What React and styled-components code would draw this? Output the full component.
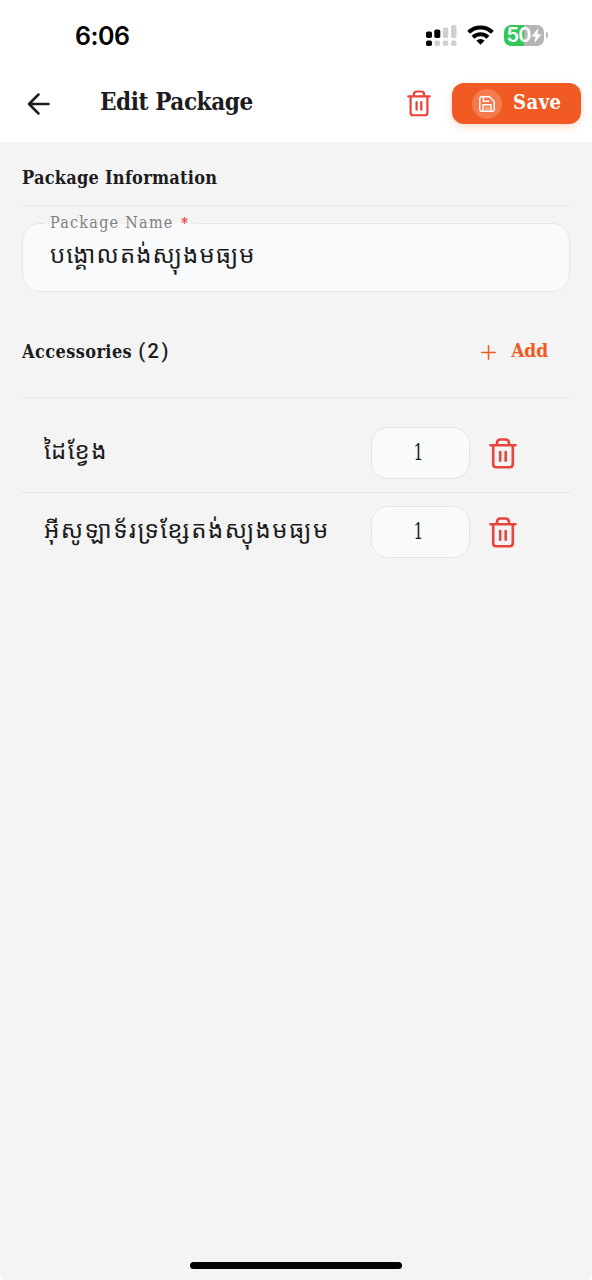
import React, { useState } from 'react';
import styled, { createGlobalStyle } from 'styled-components';

const slab = `'Roboto Slab', 'DejaVu Serif Condensed', 'DejaVu Serif', serif`;
const khmer = `'Noto Sans Khmer', 'Khmer OS', 'Noto Sans', sans-serif`;

const GlobalStyle = createGlobalStyle`
  * { box-sizing: border-box; }
  body { margin: 0; background: #fff; }
  button { border: 0; padding: 0; background: none; cursor: pointer; }
`;

const Screen = styled.div`
  display: flex;
  flex-direction: column;
  width: 592px;
  height: 1280px;
  overflow: hidden;
  background: #f4f4f4;
  border-radius: 0 0 5px 5px;
  color: #1c1c1e;
`;

const StatusBar = styled.div`
  display: flex;
  align-items: center;
  justify-content: space-between;
  height: 70px;
  padding: 0 44px 0 75px;
  background: #fff;
`;

const Time = styled.span`
  padding-top: 1px;
  font: 600 25px/30px Inter, sans-serif;
  letter-spacing: -0.5px;
  color: #000;
`;

const StatusIcons = styled.div`
  display: flex;
  align-items: center;
  gap: 10px;
`;

const Battery = styled.div`
  display: flex;
  align-items: center;
  gap: 2px;
`;

const BatteryBody = styled.div`
  display: flex;
  align-items: center;
  justify-content: center;
  width: 40px;
  height: 21px;
  border-radius: 7px;
  background: linear-gradient(90deg, #34c759 50%, #b5b5b5 50%);
  color: #fff;
  font: 600 20px/21px Inter, sans-serif;
  letter-spacing: -0.8px;
`;

const BatteryTip = styled.div`
  width: 2px;
  height: 6px;
  border-radius: 0 2px 2px 0;
  background: #b5b5b5;
`;

const Header = styled.header`
  display: flex;
  align-items: center;
  height: 72px;
  padding: 0 11px 5px 26px;
  background: #fff;
`;

const BackButton = styled.button`
  display: flex;
  width: 74px;
`;

const Title = styled.h1`
  flex: 1;
  margin: 0;
  padding-bottom: 4px;
  font: 700 24px/30px ${slab};
  letter-spacing: -0.42px;
  white-space: nowrap;
`;

const DeleteButton = styled.button`
  display: flex;
  color: #e8443c;
`;

const SaveButton = styled.button`
  display: flex;
  align-items: center;
  width: 129px;
  height: 41px;
  margin-left: 21px;
  padding-left: 20px;
  border-radius: 12px;
  background: #f15a22;
  box-shadow: 0 3px 8px rgba(241, 90, 34, 0.22);
  color: #fff;
`;

const SaveBadge = styled.span`
  display: flex;
  align-items: center;
  justify-content: center;
  width: 30px;
  height: 30px;
  margin-right: 11px;
  border-radius: 50%;
  background: rgba(255, 255, 255, 0.2);
`;

const SaveText = styled.span`
  padding-bottom: 4px;
  font: 700 20px/26px ${slab};
  letter-spacing: 0.5px;
`;

const Content = styled.main`
  flex: 1;
  padding: 0 22px;
`;

const SectionHead = styled.div`
  display: flex;
  align-items: center;
  justify-content: space-between;
  height: ${p => p.$height}px;
  padding: ${p => p.$top || 0}px 22px ${p => p.$bottom || 0}px 0;
  border-bottom: 1px solid #e4e4e6;
`;

const SectionTitle = styled.h2`
  margin: 0;
  font: 700 18px/26px ${slab};
  letter-spacing: ${p => p.$spacing || 0.25}px;
  white-space: nowrap;
`;

const Count = styled.span`
  font: 500 20px/26px Roboto, sans-serif;
  letter-spacing: 2.5px;
`;

const Field = styled.div`
  position: relative;
  height: 69px;
  margin: 17px 0 24px;
  padding: 10px 27px 0;
  border: 1px solid #e4e6ea;
  border-radius: 18px;
  background: #f9fafc;
`;

const Label = styled.label`
  position: absolute;
  top: -12px;
  left: 21px;
  padding: 0 6px;
  background: linear-gradient(#f4f4f4 12px, #f9fafc 12px);
  color: #808080;
  font: 400 16px/22px ${slab};
  letter-spacing: 1.25px;
  white-space: nowrap;
`;

const Required = styled.span`
  margin-left: 2px;
  color: #ee3f3f;
  font-size: 14px;
  font-weight: 700;
  letter-spacing: 0;
`;

const Khmer = styled.span`
  display: block;
  font: 400 24px/40px ${khmer};
  letter-spacing: ${p => p.$spacing || 1.1}px;
  white-space: nowrap;
`;

const AddButton = styled.button`
  display: flex;
  align-items: center;
  gap: 15px;
  padding-bottom: 3px;
  color: #f15a22;
  font: 700 19px/26px ${slab};
  letter-spacing: -0.1px;

  svg { margin-top: 5px; }
`;

const List = styled.div`
  padding-top: 15px;
`;

const Row = styled.div`
  display: flex;
  align-items: center;
  height: 79px;
  padding: 1px 53px 0 22px;

  & + & { padding-top: 0; border-top: 1px solid #e4e4e6; }
`;

const RowName = styled.div`
  flex: 1;
  min-width: 0;
  padding-bottom: 6px;
`;

const Quantity = styled.div`
  display: flex;
  align-items: center;
  justify-content: center;
  width: 99px;
  height: 52px;
  margin-right: 19px;
  padding: 0 4px 0 0;
  border: 1px solid #e4e6ea;
  border-radius: 17px;
  background: #f9fafc;
`;

const QuantityValue = styled.span`
  font: 400 22px/28px ${slab};
  transform: scaleX(0.78);
`;

const HomeIndicator = styled.div`
  align-self: center;
  width: 212px;
  height: 7px;
  margin-bottom: 11px;
  border-radius: 4px;
  background: #000;
`;

const TrashIcon = ({ width = 28, height = 31 }) => (
  <svg width={width} height={height} viewBox="0 0 28 31" fill="none" stroke="currentColor" strokeWidth="2.6" strokeLinecap="round" strokeLinejoin="round">
    <path d="M1.5 7.2h25M8 7V5.2Q8 1.5 11.5 1.5h5Q20 1.5 20 5.2V7M4.2 7.2v19q0 3 3 3h13.6q3 0 3-3v-19M11.2 14v8.8M16.7 14v8.8" />
  </svg>
);

const SignalIcon = () => (
  <svg width="31" height="21" viewBox="0 0 31 21" fill="#cfcfcf">
    <rect x="0" y="6.5" width="6" height="6.5" rx="1.8" fill="#000" />
    <rect x="8.3" y="4.5" width="6" height="8.5" rx="1.8" fill="#000" />
    <rect x="16.8" y="2.5" width="5.5" height="10.5" rx="1.6" />
    <rect x="25" y="0" width="5.5" height="13" rx="1.6" />
    <rect x="0" y="15.5" width="6" height="5.5" rx="1.8" fill="#000" />
    <rect x="8.5" y="15.5" width="5.5" height="5.5" rx="1.8" />
    <rect x="16.8" y="15.5" width="5.5" height="5.5" rx="1.8" />
    <rect x="25" y="15.5" width="5.5" height="5.5" rx="1.8" />
  </svg>
);

const WifiIcon = () => (
  <svg width="27" height="20" viewBox="0 0 27 20" fill="none" stroke="#000" strokeWidth="4">
    <path d="M1.6 7.3a17 17 0 0 1 23.8 0M6 12.3a10.7 10.7 0 0 1 15 0" />
    <path d="M9.3 15.6a6 6 0 0 1 8.4 0L13.5 19.8z" fill="#000" stroke="none" />
  </svg>
);

const accessories = [
  { id: 1, name: 'ដៃខ្វែង', quantity: 1 },
  { id: 2, name: 'អ៊ីសូឡាទ័រទ្រខ្សែតង់ស្យុងមធ្យម', quantity: 1 },
];

function App() {
  const [items, setItems] = useState(accessories);

  const removeItem = id => setItems(items.filter(item => item.id !== id));

  return (
    <Screen>
      <GlobalStyle />
      <StatusBar>
        <Time>6:06</Time>
        <StatusIcons>
          <SignalIcon />
          <WifiIcon />
          <Battery>
            <BatteryBody>
              50
              <svg width="11" height="15" viewBox="0 0 11 15" fill="#fff">
                <path d="M7.5 0 0.5 8.5h4L3.5 15l7-8.8h-4z" />
              </svg>
            </BatteryBody>
            <BatteryTip />
          </Battery>
        </StatusIcons>
      </StatusBar>
      <Header>
        <BackButton aria-label="Back">
          <svg width="25" height="24" viewBox="0 0 25 24" fill="none" stroke="#1c1c1e" strokeWidth="2.5" strokeLinecap="round" strokeLinejoin="round">
            <path d="M22.5 12H3M12.5 2.5 3 12l9.5 9.5" />
          </svg>
        </BackButton>
        <Title>Edit Package</Title>
        <DeleteButton aria-label="Delete package">
          <TrashIcon width={24} height={27} />
        </DeleteButton>
        <SaveButton>
          <SaveBadge>
            <svg width="16" height="16" viewBox="0 0 16 16" fill="none" stroke="#fff" strokeWidth="1.4" strokeLinejoin="round">
              <path d="M2.7.8h7.8l4.7 4.7v7.8q0 1.9-1.9 1.9H2.7q-1.9 0-1.9-1.9V2.7Q.8.8 2.7.8zM4.3 1v4.3h6M4 15V8.8h8V15" />
              <path d="M5.7 11h4.8v3.4H5.7z" fill="#fff" fillOpacity=".35" stroke="none" />
            </svg>
          </SaveBadge>
          <SaveText>Save</SaveText>
        </SaveButton>
      </Header>
      <Content>
        <SectionHead $height={64} $top={8}>
          <SectionTitle>Package Information</SectionTitle>
        </SectionHead>
        <Field>
          <Label>Package Name <Required>*</Required></Label>
          <Khmer>បង្គោលតង់ស្យុងមធ្យម</Khmer>
        </Field>
        <SectionHead $height={82} $bottom={11}>
          <SectionTitle $spacing={0.4}>Accessories <Count>({items.length})</Count></SectionTitle>
          <AddButton>
            <svg width="15" height="15" viewBox="0 0 15 15" stroke="currentColor" strokeWidth="1.5" strokeLinecap="round">
              <path d="M7.5.8v13.4M.8 7.5h13.4" />
            </svg>
            Add
          </AddButton>
        </SectionHead>
        <List>
          {items.map(item => (
            <Row key={item.id}>
              <RowName><Khmer $spacing={1.5}>{item.name}</Khmer></RowName>
              <Quantity><QuantityValue>{item.quantity}</QuantityValue></Quantity>
              <DeleteButton aria-label="Remove" onClick={() => removeItem(item.id)}>
                <TrashIcon />
              </DeleteButton>
            </Row>
          ))}
        </List>
      </Content>
      <HomeIndicator />
    </Screen>
  );
}

export default App;
